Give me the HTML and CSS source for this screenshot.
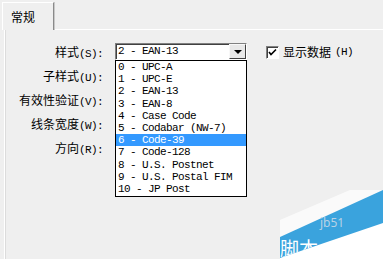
FILE: index.html
```html
<!DOCTYPE html>
<html lang="zh-CN">

<head>
    <meta charset="UTF-8" />
    <title>条码属性</title>
    <link rel="stylesheet" href="styles.css">
</head>

<body>
    <div class="dialog">
        <div class="tabs">
            <div class="tab">常规</div>
            <div class="tab-rest"></div>
        </div>

        <div class="panel">
            <div class="form">
                <label class="label">样式<span class="key">(S):</span></label>
                <div class="field">
                    <div class="combo">
                        <span class="combo-text">2 - EAN-13</span>
                        <span class="combo-button"><span class="arrow"></span></span>
                    </div>
                    <label class="check">
                        <span class="box">
                            <svg width="9" height="9" viewBox="0 0 9 9">
                                <path d="M1 4 L3 6.5 L8 1.5" fill="none" stroke="#000" stroke-width="1.6" />
                            </svg>
                        </span>
                        显示数据<span class="key">(H)</span>
                    </label>
                </div>

                <label class="label">子样式<span class="key">(U):</span></label>
                <div class="field"></div>

                <label class="label">有效性验证<span class="key">(V):</span></label>
                <div class="field"></div>

                <label class="label">线条宽度<span class="key">(W):</span></label>
                <div class="field"></div>

                <label class="label">方向<span class="key">(R):</span></label>
                <div class="field"></div>
            </div>
        </div>

        <ul class="dropdown">
            <li>0 - UPC-A</li>
            <li>1 - UPC-E</li>
            <li>2 - EAN-13</li>
            <li>3 - EAN-8</li>
            <li>4 - Case Code</li>
            <li>5 - Codabar (NW-7)</li>
            <li class="selected">6 - Code-39</li>
            <li>7 - Code-128</li>
            <li>8 - U.S. Postnet</li>
            <li>9 - U.S. Postal FIM</li>
            <li>10 - JP Post</li>
        </ul>

        <svg class="watermark" width="103" height="69" viewBox="0 0 103 69">
            <defs>
                <clipPath id="band">
                    <polygon points="0,47 103,0 103,33 0,68" />
                </clipPath>
            </defs>
            <polygon points="0,30 70,0 103,0 103,1 0,48" fill="#fafafa" />
            <polygon points="0,48 103,1 103,69 0,69" fill="#ffffff" />
            <polygon points="0,47 103,0 103,33 0,68" fill="#3aa3dd" />
            <text x="40" y="37" class="wm-small">jb51</text>
            <text x="0" y="66" class="wm-big" clip-path="url(#band)">脚本</text>
        </svg>
    </div>
</body>

</html>
```

FILE: styles.css
```css
body {
    margin: 0;
    background-color: #efefef;
    font-family: "Noto Sans CJK SC", sans-serif;
    font-size: 12px;
    color: #000;
}

.dialog {
    position: relative;
    width: 383px;
    height: 259px;
    overflow: hidden;
}

.tabs {
    display: flex;
    padding: 2px 0 0 2px;
    height: 28px;
}

.tab {
    border-top: 1px solid #ffffff;
    border-left: 1px solid #ffffff;
    border-right: 1px solid #8a8a8a;
    box-shadow: 1px 0 0 #c8c8c8;
    padding-left: 8px;
    box-sizing: border-box;
    width: 52px;
    height: 28px;
    line-height: 28px;
}

.tab-rest {
    flex: 1;
    border-bottom: 1px solid #ffffff;
    margin-left: 1px;
}

.panel {
    margin-left: 4px;
    height: 229px;
    border-left: 1px solid #ffffff;
    box-shadow: inset 1px 0 0 #dcdcdc;
    padding-top: 10px;
    box-sizing: border-box;
}

.form {
    display: grid;
    grid-template-columns: 98px 1fr;
    grid-auto-rows: 24px;
    column-gap: 12px;
}

.label {
    text-align: right;
    line-height: 24px;
    white-space: nowrap;
}

.key {
    font-family: "Liberation Mono", monospace;
    font-size: 11px;
    letter-spacing: -0.6px;
}

.field {
    display: flex;
    align-items: flex-start;
}

.combo {
    display: flex;
    width: 132px;
    height: 17px;
    margin-top: 3px;
    box-sizing: border-box;
    background: #ffffff;
    border: 1px solid;
    border-color: #808080 #ffffff #ffffff #808080;
    box-shadow: inset 1px 1px 0 #404040;
}

.combo-text {
    flex: 1;
    padding-left: 2px;
    font-family: "Liberation Mono", monospace;
    font-size: 11px;
    letter-spacing: -0.6px;
    line-height: 15px;
}

.combo-button {
    display: flex;
    justify-content: center;
    align-items: center;
    width: 17px;
    height: 15px;
    box-sizing: border-box;
    background: #e8e8e8;
    border: 1px solid;
    border-color: #f8f8f8 #404040 #404040 #f8f8f8;
}

.arrow {
    width: 0;
    height: 0;
    border-left: 4px solid transparent;
    border-right: 4px solid transparent;
    border-top: 4px solid #000;
}

.check {
    display: flex;
    align-items: center;
    gap: 4px;
    margin-left: 19px;
    margin-top: 2px;
    line-height: 20px;
}

.box {
    display: flex;
    justify-content: center;
    align-items: center;
    width: 13px;
    height: 13px;
    box-sizing: border-box;
    background: #ffffff;
    border: 1px solid;
    border-color: #808080 #ffffff #ffffff #808080;
    box-shadow: inset 1px 1px 0 #404040;
}

.dropdown {
    position: absolute;
    left: 115px;
    top: 60px;
    width: 132px;
    height: 137px;
    box-sizing: border-box;
    margin: 0;
    padding: 0;
    list-style: none;
    background: #ffffff;
    border: 1px solid #000;
    font-family: "Liberation Mono", monospace;
    font-size: 11px;
    letter-spacing: -0.6px;
}

.dropdown li {
    height: 12.2px;
    line-height: 12.2px;
    padding-left: 2px;
    white-space: nowrap;
}

.dropdown .selected {
    background: #3399ff;
    color: #ffffff;
}

.watermark {
    position: absolute;
    right: 0;
    bottom: 0;
}

.wm-small {
    font-family: "Noto Sans", sans-serif;
    font-size: 12px;
    fill: #b8d2e6;
}

.wm-big {
    font-family: "Noto Sans CJK SC", sans-serif;
    font-size: 19px;
    fill: #ffffff;
}
```
